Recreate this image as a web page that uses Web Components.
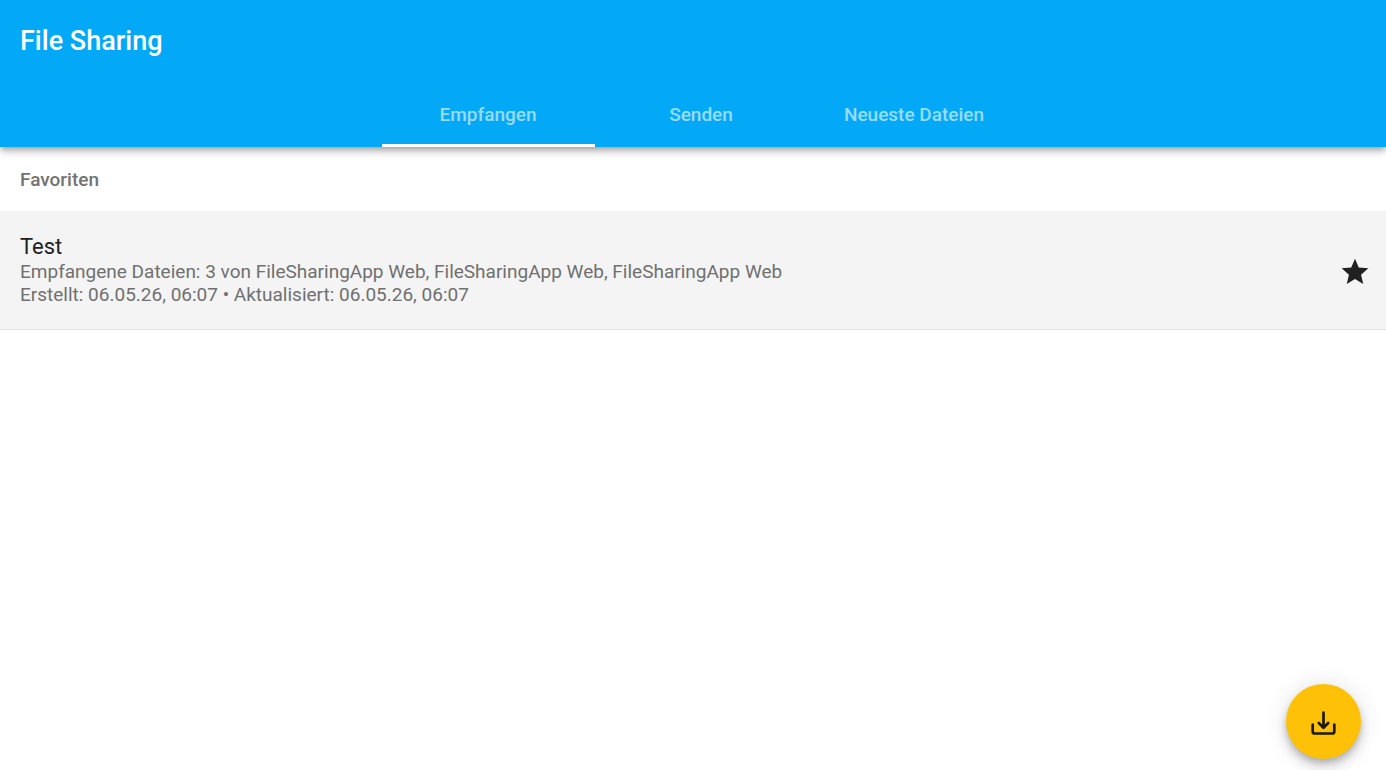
<!DOCTYPE html>
<html lang="de">
<head>
<meta charset="utf-8">
<meta name="viewport" content="width=device-width, initial-scale=1">
<title>File Sharing</title>
<style>
html, body { margin: 0; min-height: 100%; background: #fff; }
body { font-family: Roboto, "Liberation Sans", sans-serif; color: #212121; }
</style>
</head>
<body>
<file-sharing-app></file-sharing-app>
<script>
function define(name, html, setup) {
  const template = document.createElement('template');
  template.innerHTML = html;
  customElements.define(name, class extends HTMLElement {
    constructor() {
      super();
      this.attachShadow({ mode: 'open' }).append(template.content.cloneNode(true));
    }
    connectedCallback() { if (setup) setup(this, this.shadowRoot); }
  });
}

define('app-tab', `
<style>
:host { display: block; min-width: 213px; }
:host([active]) button { border-bottom-color: #fff; }
button { box-sizing: border-box; width: 100%; height: 64px; margin: 0; padding: 3px 16px 0; border: 0;
  border-bottom: 3px solid transparent; background: none; color: rgba(255,255,255,.6);
  font: 500 19px/24px Roboto, sans-serif; cursor: pointer; }
</style>
<button type="button" role="tab"><slot></slot></button>`,
(host, root) => root.querySelector('button').setAttribute('aria-selected', host.hasAttribute('active')));

define('app-header', `
<style>
:host { display: block; position: relative; background: #03a9f6; color: #fff;
  box-shadow: 0 3px 5px -1px rgba(0,0,0,.2), 0 5px 7px rgba(0,0,0,.14), 0 1px 13px rgba(0,0,0,.12); }
h1 { margin: 0; padding: 25px 20px; font-size: 27px; line-height: 33px; font-weight: 500; }
nav { display: flex; justify-content: center; padding-left: 16px; }
</style>
<h1><slot name="title"></slot></h1>
<nav role="tablist"><slot></slot></nav>`);

define('file-entry', `
<style>
:host { display: flex; align-items: center; justify-content: space-between; gap: 16px;
  padding: 22px 15px 23px 20px; background: #f4f4f4; border-bottom: 1px solid #e0e0e0; }
h3 { margin: 0; font-size: 22px; line-height: 27px; font-weight: 400; color: #212121; }
p { margin: 0; font-size: 19px; line-height: 23px; color: #707070; }
button { display: flex; margin: 4px 0 0; padding: 0; border: 0; background: none; color: #212121; cursor: pointer; }
svg { width: 32px; height: 32px; }
</style>
<div>
  <h3><slot name="name"></slot></h3>
  <p><slot name="files"></slot></p>
  <p><slot name="dates"></slot></p>
</div>
<button type="button" aria-label="Favorit"><svg viewBox="0 0 24 24" aria-hidden="true"><path fill="currentColor" d="M12 17.270L18.180 21l-1.640-7.030L22 9.240l-7.190-.61L12 2 9.190 8.630 2 9.240l5.460 4.730L5.820 21z"/></svg></button>`);

define('file-list', `
<style>
:host { display: block; }
h2 { margin: 0; padding: 21px 20px 19px; font-size: 19px; line-height: 24px; font-weight: 500; color: #737373; }
</style>
<section><h2><slot name="heading"></slot></h2><slot></slot></section>`);

define('receive-button', `
<style>
:host { display: block; position: fixed; right: 25px; bottom: 11px; }
button { display: flex; align-items: center; justify-content: center; width: 75px; height: 75px; padding: 0;
  border: 0; border-radius: 50%; background: #ffc107; color: #1c1a08; cursor: pointer;
  box-shadow: 0 4px 7px -1px rgba(0,0,0,.2), 0 8px 13px rgba(0,0,0,.14), 0 1px 24px rgba(0,0,0,.12); }
svg { width: 32px; height: 32px; }
</style>
<button type="button" aria-label="Dateien empfangen"><svg viewBox="0 0 32 32" fill="none" stroke="currentColor" stroke-width="2.700" stroke-linecap="round" stroke-linejoin="round" aria-hidden="true"><path d="M15.500 6.500v15M10.800 17l4.700 4.700 4.700-4.700M4.700 18.500v7q0 2 2 2h17.600q2 0 2-2v-7"/></svg></button>`);

define('file-sharing-app', `
<style>:host { display: block; }</style>
<app-header>
  <span slot="title">File Sharing</span>
  <app-tab active>Empfangen</app-tab>
  <app-tab>Senden</app-tab>
  <app-tab>Neueste Dateien</app-tab>
</app-header>
<main>
  <file-list>
    <span slot="heading">Favoriten</span>
    <file-entry>
      <span slot="name">Test</span>
      <span slot="files">Empfangene Dateien: 3 von FileSharingApp Web, FileSharingApp Web, FileSharingApp Web</span>
      <span slot="dates">Erstellt: 06.05.26, 06:07 • Aktualisiert: 06.05.26, 06:07</span>
    </file-entry>
  </file-list>
</main>
<receive-button></receive-button>`);
</script>
</body>
</html>
